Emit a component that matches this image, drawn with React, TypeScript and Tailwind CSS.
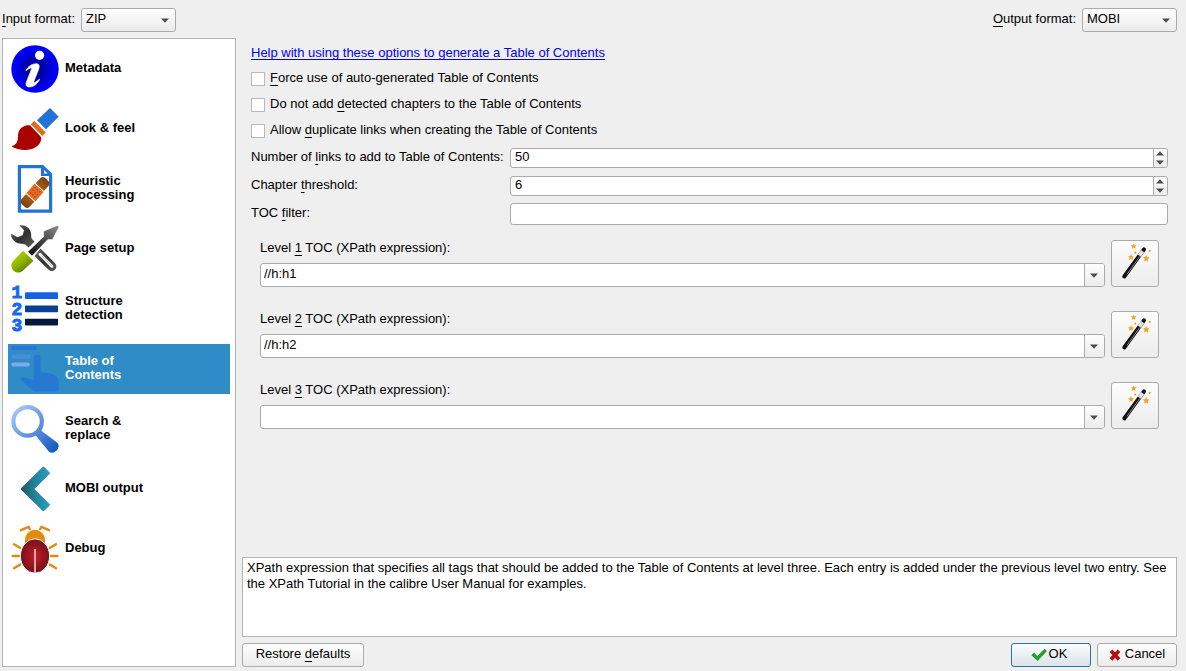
import { useId, useState, type ReactNode } from "react";

const FIELD = "border border-[#ababab] bg-white";
const BUTTON = "rounded-[3px] border border-[#ababab] bg-linear-to-b from-[#fdfdfd] to-[#ececec]";

function Key({ children }: { children: ReactNode }) {
  return (
    <span className="underline decoration-1 underline-offset-[3px] [text-decoration-skip-ink:none]">
      {children}
    </span>
  );
}

function Arrow({ up = false }: { up?: boolean }) {
  return (
    <svg width="8" height="5" viewBox="0 0 8 5" className="shrink-0" aria-hidden="true">
      <path d={up ? "M0 4.6 4 0.2 8 4.6Z" : "M0 0.4H8L4 4.8Z"} fill="#4c4c4c" />
    </svg>
  );
}

function InfoIcon() {
  return (
    <svg viewBox="0 0 48 48" className="size-12 shrink-0" aria-hidden="true">
      <defs>
        <radialGradient id="info">
          <stop offset="0" stopColor="#000088" />
          <stop offset="0.45" stopColor="#0000b4" />
          <stop offset="0.85" stopColor="#0000fa" />
        </radialGradient>
      </defs>
      <circle cx="24" cy="24" r="23.7" fill="url(#info)" />
      <circle cx="28.6" cy="10.3" r="4.6" fill="#fff" />
      <path
        d="M14.8 25.8C17 21 22 18.2 26 18.7C28.6 19.2 28.6 21.4 27.7 24.2L23 36.2C22.4 38 23.4 38 24.6 37L28.6 34C28 37.5 23 42 18.5 42C15 42 14.3 39.6 15.6 36.4L20.3 24.6C21 22.6 19.4 22.7 18.3 23.6Z"
        fill="#fff"
        stroke="#fff"
        strokeWidth="0.6"
      />
    </svg>
  );
}

function BrushIcon() {
  return (
    <svg viewBox="0 0 48 48" className="size-12 shrink-0" aria-hidden="true">
      <path d="M39 3 47.7 11.7 35 24.3 26 15.3Z" fill="#2273d8" />
      <path d="M23.3 15.7 34.7 27.5 31.3 31 19.8 19.3Z" fill="#e06d1b" />
      <path
        d="M19 20.2C14 20 10 22 8.2 25.5C6 30 8 35 5.2 38.3C4 40 2 40.7 0.5 41.3C4 44 9 45 14 45C22 45 29 41 30.2 34.5C30.5 33 30 32 29.4 31.2Z"
        fill="#a90000"
      />
    </svg>
  );
}

function HeuristicIcon() {
  return (
    <svg viewBox="0 0 48 48" className="size-12 shrink-0" aria-hidden="true">
      <defs>
        <linearGradient id="plaster" x1="0" x2="1">
          <stop offset="0" stopColor="#7c4210" />
          <stop offset="0.5" stopColor="#c26a1c" />
          <stop offset="1" stopColor="#7c4210" />
        </linearGradient>
      </defs>
      <path d="M8.4 1.6H31.5L39.6 9.5V46.2H8.4Z" fill="#fff" stroke="#2273d8" strokeWidth="3.2" />
      <path d="M30 0.5V11H41V9.8L31.6 0.5Z" fill="#2273d8" />
      <path d="M33 5V8.5H36.5Z" fill="#fff" />
      <g transform="rotate(-48 24 27.5)">
        <rect x="6.5" y="21.8" width="35" height="11.4" rx="4" fill="url(#plaster)" />
        <rect x="17.3" y="21.4" width="13.4" height="12.2" fill="#e56a20" />
        <path d="M17.3 21.4V33.6M30.7 21.4V33.6" stroke="#fff" strokeWidth="1" />
        <path d="M20 24.5H29M20 27.5H29M20 30.5H29" stroke="#b84310" strokeWidth="1.3" strokeDasharray="1.4 2" />
      </g>
    </svg>
  );
}

function ToolsIcon() {
  return (
    <svg viewBox="0 0 48 48" className="size-12 shrink-0" aria-hidden="true">
      <defs>
        <linearGradient id="steel" x1="0" y1="0" x2="1" y2="1">
          <stop offset="0" stopColor="#707070" />
          <stop offset="0.5" stopColor="#303030" />
          <stop offset="1" stopColor="#606060" />
        </linearGradient>
        <linearGradient id="blade" x1="1" y1="0" x2="0" y2="1">
          <stop offset="0" stopColor="#909090" />
          <stop offset="0.5" stopColor="#454545" />
          <stop offset="1" stopColor="#0a0a0a" />
        </linearGradient>
        <linearGradient id="grip" x1="0" y1="0" x2="0.8" y2="1">
          <stop offset="0.2" stopColor="#a8d000" />
          <stop offset="0.5" stopColor="#92b800" />
          <stop offset="1" stopColor="#526b00" />
        </linearGradient>
      </defs>
      <path
        d="M8.5 0.5C14 -0.5 19 3 20 8C20.4 10.5 20 12 20.6 13.4L23.5 16.7L17.5 22.5L14.2 19.5C12 18.6 8 19.4 4.5 17C1 14.5 -0.5 11.5 0.4 8.8L6.5 12.3L11.6 10.2L13 5.2Z"
        fill="url(#steel)"
      />
      <path d="M29.5 23.5 44 38.2C48 42.5 42.3 49 37.5 44.8L23.5 31Z" fill="url(#steel)" />
      <path d="M29 29.3 40.8 41.2" stroke="#fff" strokeWidth="3" strokeLinecap="round" />
      <path d="M30.6 30.8 40.5 40.8" stroke="#b5b5b5" strokeWidth="1" />
      <path
        d="M16.8 26.8 32.8 11.5 32.6 6.3 46.2 0.4 48 2.2 41.4 14.4 36.8 14.6 21 31Z"
        fill="url(#blade)"
        stroke="#fff"
        strokeWidth="0.5"
      />
      <path d="M12 25.8 22.5 35.8 11.5 46C8.5 48.3 5 48 2.4 45.5C-0.2 43 -0.4 39.2 2.2 36Z" fill="url(#grip)" />
    </svg>
  );
}

function StructureIcon() {
  return (
    <svg viewBox="0 0 48 48" className="size-12 shrink-0 overflow-visible" aria-hidden="true">
      <g
        fill="#1769ee"
        stroke="#1769ee"
        strokeWidth="0.9"
        fontFamily="Liberation Mono, monospace"
        fontWeight="700"
        fontSize="18"
        textAnchor="middle"
      >
        <text x="6" y="13.3">1</text>
        <text x="6" y="29.8">2</text>
        <text x="6" y="46">3</text>
      </g>
      <rect x="14" y="7.3" width="33" height="6.8" rx="0.8" fill="#1263e2" />
      <rect x="14" y="20.6" width="33" height="6.6" rx="0.8" fill="#0b3f91" />
      <rect x="14" y="33.8" width="33" height="6.6" rx="0.8" fill="#041a3b" />
    </svg>
  );
}

function ContentsIcon() {
  return (
    <svg viewBox="0 0 48 48" className="size-12 shrink-0" aria-hidden="true">
      <rect x="0.4" y="1" width="25.4" height="4" rx="2" fill="#2678d2" />
      <rect x="0.4" y="9.6" width="19.4" height="4.2" rx="2.1" fill="#478fdc" />
      <rect x="0.4" y="17.4" width="18.4" height="4.2" rx="2.1" fill="#76aced" />
      <path
        d="M22.8 13C22.8 8.6 29.4 8.6 29.4 13V27.3C34 27.2 38 28.2 42 29.5C46 31 47.7 33 47.7 36.5V44C47.7 45.8 46.8 46.6 45 46.6H26C24 46.6 22.6 46 21 44.6L10.5 35.8C8.8 33.8 11 32.2 13.4 32.6L22.8 35.3Z"
        fill="#2678d2"
      />
    </svg>
  );
}

function SearchIcon() {
  return (
    <svg viewBox="0 0 48 48" className="size-12 shrink-0" aria-hidden="true">
      <defs>
        <linearGradient id="lens" gradientUnits="userSpaceOnUse" x1="2" y1="4" x2="46" y2="46">
          <stop offset="0" stopColor="#a9c9f8" />
          <stop offset="0.5" stopColor="#5d90dd" />
          <stop offset="1" stopColor="#0f59bd" />
        </linearGradient>
      </defs>
      <circle cx="16.6" cy="16.4" r="14.2" fill="none" stroke="url(#lens)" strokeWidth="4.2" />
      <path
        d="M29.7 23.5C30.3 25.6 31.5 26.8 33 27.8L46 37.4C51 41.4 43.5 51 38 46.7L27.7 34.2C26.7 32.6 25.4 31 23.5 30Z"
        fill="url(#lens)"
      />
    </svg>
  );
}

function ChevronIcon() {
  return (
    <svg viewBox="0 0 48 48" className="size-12 shrink-0" aria-hidden="true">
      <defs>
        <linearGradient id="chevron">
          <stop offset="0" stopColor="#1b5563" />
          <stop offset="0.5" stopColor="#23839b" />
          <stop offset="1" stopColor="#2b9dbd" />
        </linearGradient>
      </defs>
      <path
        d="M9.4 24 31.5 2Q32.3 1.2 33.1 2L38.5 7.3Q39.2 8.1 38.5 8.9L23.4 24 38.5 39.1Q39.2 39.9 38.5 40.7L33.1 45.8Q32.3 46.6 31.5 45.8Z"
        fill="url(#chevron)"
      />
    </svg>
  );
}

function BugIcon() {
  return (
    <svg viewBox="0 0 48 48" className="size-12 shrink-0" aria-hidden="true">
      <defs>
        <radialGradient id="bug">
          <stop offset="0" stopColor="#c81b26" />
          <stop offset="1" stopColor="#75121b" />
        </radialGradient>
      </defs>
      <path d="M14 20V14.7A10 10 0 0 1 34 14.7V20Z" fill="#e08d0b" />
      <g fill="none" stroke="#e08d0b" strokeWidth="2.5" strokeLinecap="round" strokeLinejoin="round">
        <path d="M10 5.2 17.6 1.8 18.8 4M38 5.2 30.4 1.8 29.2 4" />
        <path d="M3 19.2 9 22.8M1.7 31H8.2M3 43.2 9 39.6M45 19.2 39 22.8M46.3 31H39.8M45 43.2 39 39.6" />
      </g>
      <ellipse cx="24" cy="31" rx="14.6" ry="17.2" fill="url(#bug)" stroke="#fff" strokeWidth="1" />
      <path d="M24 24V48" stroke="#e2b9bb" strokeWidth="1.8" />
    </svg>
  );
}

const STAR = "M0 -2.6 .8 -.9 2.6 -.7 1.3 .6 1.6 2.4 0 1.5 -1.6 2.4 -1.3 .6 -2.6 -.7 -.8 -.9Z";

function WandIcon() {
  return (
    <svg viewBox="0 0 40 40" className="size-10" aria-hidden="true">
      <path d="M9.3 32.5 29 5.3" stroke="#111" strokeWidth="4" strokeLinecap="round" />
      <path d="M12 30.3 24.8 12.4" stroke="#999" strokeWidth="0.9" />
      <path d="M24.3 11.7 27.6 7.1" stroke="#e2e2e2" strokeWidth="3.8" />
      <g fill="#f3a21b">
        <path d={STAR} transform="translate(18.7 2.2)" stroke="#f3a21b" strokeWidth="0.3" />
        <path d={STAR} transform="translate(16 13.2)" stroke="#f3a21b" strokeWidth="0.3" />
        <path d={STAR} transform="translate(31.2 14.4) scale(1.15)" stroke="#f3a21b" strokeWidth="0.3" />
        <circle cx="20.3" cy="8.6" r="1.1" />
        <circle cx="34.7" cy="6.9" r="1.1" />
      </g>
    </svg>
  );
}

const PAGES: { label: string[]; icon: ReactNode }[] = [
  { label: ["Metadata"], icon: <InfoIcon /> },
  { label: ["Look & feel"], icon: <BrushIcon /> },
  { label: ["Heuristic", "processing"], icon: <HeuristicIcon /> },
  { label: ["Page setup"], icon: <ToolsIcon /> },
  { label: ["Structure", "detection"], icon: <StructureIcon /> },
  { label: ["Table of", "Contents"], icon: <ContentsIcon /> },
  { label: ["Search &", "replace"], icon: <SearchIcon /> },
  { label: ["MOBI output"], icon: <ChevronIcon /> },
  { label: ["Debug"], icon: <BugIcon /> },
];

function FormatSelect({ label, options }: { label: ReactNode; options: string[] }) {
  const id = useId();
  return (
    <div className="flex items-center gap-1.5">
      <label htmlFor={id} className="pb-[3px]">{label}</label>
      <div className="relative">
        <select id={id} className={`${BUTTON} block h-6 w-[95px] appearance-none pb-[3px] pl-1`}>
          {options.map((o) => (
            <option key={o}>{o}</option>
          ))}
        </select>
        <span className="pointer-events-none absolute inset-y-0 right-[7px] flex items-center">
          <Arrow />
        </span>
      </div>
    </div>
  );
}

function CheckOption({ children }: { children: ReactNode }) {
  return (
    <label className="flex h-5 items-center gap-[5px]">
      <input type="checkbox" className="size-3.5 appearance-none border border-[#b9b9b9] bg-white checked:bg-[#308cc6]" />
      <span className="pb-[3px]">{children}</span>
    </label>
  );
}

function SpinBox({ id, initial }: { id: string; initial: number }) {
  const [value, setValue] = useState(initial);
  return (
    <div className={`${FIELD} flex h-5 overflow-hidden rounded-[3px]`}>
      <input
        id={id}
        value={value}
        onChange={(e) => setValue(Number(e.target.value) || 0)}
        className="min-w-0 flex-1 pb-[3px] pl-1 outline-none"
      />
      <div className="flex w-3.5 flex-col border-l border-[#ababab] bg-linear-to-b from-[#fdfdfd] to-[#ececec] pr-px">
        <button aria-label="Increase" className="flex flex-1 items-center justify-center" onClick={() => setValue(value + 1)}>
          <Arrow up />
        </button>
        <button aria-label="Decrease" className="flex flex-1 items-center justify-center" onClick={() => setValue(value - 1)}>
          <Arrow />
        </button>
      </div>
    </div>
  );
}

function LevelRow({ level, value }: { level: number; value: string }) {
  const id = useId();
  return (
    <div className="flex h-[47px] gap-1.5">
      <div className="flex min-w-0 flex-1 flex-col justify-between">
        <label htmlFor={id} className="self-start">
          Level <Key>{level}</Key> TOC (XPath expression):
        </label>
        <div className={`${FIELD} flex h-6 overflow-hidden rounded-[3px]`}>
          <input id={id} defaultValue={value} className="min-w-0 flex-1 pb-[3px] pl-[3px] outline-none" />
          <button
            aria-label={`Level ${level} history`}
            className="flex w-5 items-center justify-center border-l border-[#ababab] bg-linear-to-b from-[#fdfdfd] to-[#ececec] pr-0.5"
          >
            <Arrow />
          </button>
        </div>
      </div>
      <button aria-label={`Level ${level} wizard`} className={`${BUTTON} flex w-12 items-center justify-center`}>
        <WandIcon />
      </button>
    </div>
  );
}

export default function App() {
  const [current, setCurrent] = useState(5);
  return (
    <div className="flex min-h-screen flex-col bg-[#efefef] pt-2 pr-[9px] pb-1 pl-0.5 font-['Liberation_Sans',Arial,sans-serif] text-[13px] leading-4 text-black">
      <header className="flex justify-between pb-1.5">
        <FormatSelect label={<><Key>I</Key>nput format:</>} options={["ZIP", "EPUB", "DOCX"]} />
        <FormatSelect label={<><Key>O</Key>utput format:</>} options={["MOBI", "EPUB", "PDF"]} />
      </header>

      <div className="flex flex-1 gap-1.5">
        <nav className="flex w-[234px] shrink-0 flex-col gap-2.5 border border-[#b4b4b4] bg-white p-[5px]">
          {PAGES.map((page, i) => (
            <button
              key={page.label[0]}
              aria-current={i === current ? "page" : undefined}
              onClick={() => setCurrent(i)}
              className={`flex h-[50px] items-center gap-1.5 px-[3px] text-left leading-[14px] font-bold ${
                i === current ? "bg-[#308cc6] text-white" : ""
              }`}
            >
              {page.icon}
              <span className="pb-0.5">
                {page.label.map((line) => (
                  <span key={line} className="block">{line}</span>
                ))}
              </span>
            </button>
          ))}
        </nav>

        <main className="flex min-w-0 flex-1 flex-col gap-1.5">
          <section className="flex flex-1 flex-col px-[9px] pt-[7px]">
            <a
              href="#help"
              className="self-start text-[#0000ff] underline decoration-1 underline-offset-2 [text-decoration-skip-ink:none]"
            >
              Help with using these options to generate a Table of Contents
            </a>
            <div className="flex flex-col items-start gap-1.5 pt-2">
              <CheckOption><Key>F</Key>orce use of auto-generated Table of Contents</CheckOption>
              <CheckOption>Do not add <Key>d</Key>etected chapters to the Table of Contents</CheckOption>
              <CheckOption>Allow <Key>d</Key>uplicate links when creating the Table of Contents</CheckOption>
            </div>
            <div className="grid grid-cols-[253px_1fr] auto-rows-[22px] items-center gap-1.5 pt-1.5">
              <label htmlFor="links" className="pb-[3px] whitespace-nowrap">
                Number of <Key>l</Key>inks to add to Table of Contents:
              </label>
              <SpinBox id="links" initial={50} />
              <label htmlFor="threshold" className="pb-[3px]">Chapter <Key>t</Key>hreshold:</label>
              <SpinBox id="threshold" initial={6} />
              <label htmlFor="filter" className="pb-[3px]">TOC <Key>f</Key>ilter:</label>
              <input id="filter" className={`${FIELD} h-[22px] w-full rounded-[3px] px-1 outline-none`} />
            </div>
            <div className="flex flex-col gap-6 px-[9px] pt-[15px]">
              <LevelRow level={1} value="//h:h1" />
              <LevelRow level={2} value="//h:h2" />
              <LevelRow level={3} value="" />
            </div>
          </section>

          <p className="h-20 border border-[#b4b4b4] bg-white px-1 pt-0.5">
            XPath expression that specifies all tags that should be added to the Table of Contents at level three. Each
            entry is added under the previous level two entry. See the XPath Tutorial in the calibre User Manual for
            examples.
          </p>

          <footer className="flex gap-1.5">
            <button className={`${BUTTON} mr-auto h-6 w-[122px] pb-[3px]`}>
              Restore <Key>d</Key>efaults
            </button>
            <button className="flex h-6 w-20 items-center justify-center gap-0.5 rounded-[3px] border border-[#2a729f] bg-linear-to-b from-[#fafcfd] to-[#dce3e9] pr-1">
              <svg width="16" height="16" viewBox="0 0 16 16" aria-hidden="true">
                <path d="M0.3 8.2 3 5.6 6.3 8.9 13.6 1.8 16 4 6.6 14Z" fill="#1ea42d" />
              </svg>
              <span className="pb-[3px]">OK</span>
            </button>
            <button className={`${BUTTON} flex h-6 w-20 items-center justify-center gap-1`}>
              <svg width="12" height="12" viewBox="0 0 12 12" aria-hidden="true">
                <path d="M2 1.8 10 10.5M10 1.8 2 10.5" stroke="#b80d0d" strokeWidth="3.8" />
              </svg>
              <span className="pb-[3px]">Cancel</span>
            </button>
          </footer>
        </main>
      </div>
    </div>
  );
}
